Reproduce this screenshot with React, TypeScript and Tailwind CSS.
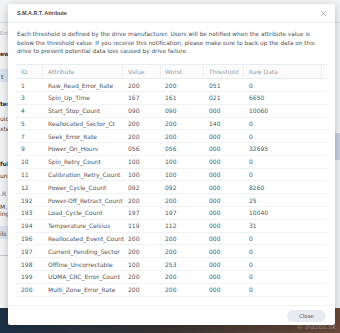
import React from 'react';

// Rows of the S.M.A.R.T. table
const rows = [
  ['1', 'Raw_Read_Error_Rate', '200', '200', '051', '0'],
  ['3', 'Spin_Up_Time', '167', '161', '021', '6650'],
  ['4', 'Start_Stop_Count', '090', '090', '000', '10060'],
  ['5', 'Reallocated_Sector_Ct', '200', '200', '140', '0'],
  ['7', 'Seek_Error_Rate', '200', '200', '000', '0'],
  ['9', 'Power_On_Hours', '056', '056', '000', '32695'],
  ['10', 'Spin_Retry_Count', '100', '100', '000', '0'],
  ['11', 'Calibration_Retry_Count', '100', '100', '000', '0'],
  ['12', 'Power_Cycle_Count', '092', '092', '000', '8260'],
  ['192', 'Power-Off_Retract_Count', '200', '200', '000', '25'],
  ['193', 'Load_Cycle_Count', '197', '197', '000', '10040'],
  ['194', 'Temperature_Celsius', '119', '112', '000', '31'],
  ['196', 'Reallocated_Event_Count', '200', '200', '000', '0'],
  ['197', 'Current_Pending_Sector', '200', '200', '000', '0'],
  ['198', 'Offline_Uncorrectable', '100', '253', '000', '0'],
  ['199', 'UDMA_CRC_Error_Count', '200', '200', '000', '0'],
  ['200', 'Multi_Zone_Error_Rate', '200', '200', '000', '0'],
];

const cols = 'grid grid-cols-[27px_80px_38px_43px_40px_78px_5px]';

export default function App() {
  return (
    <div className="relative w-[340px] h-[333px] overflow-hidden bg-gradient-to-r from-[#1d3147] via-[#3a3532] to-[#6a4a3a] font-['DejaVu_Sans',sans-serif]">
      {/* okno v pozadí (vidět jen okraj vlevo) */}
      <div className="absolute left-0 top-0 w-[340px] h-[308px] bg-[#f4f5f7]">
        <div className="absolute left-0 top-[22px] w-[340px] h-px bg-[#d9dde2]" />
        <div className="absolute left-0 top-[30px] text-[5px] text-[#a3abb4] whitespace-nowrap">Ent</div>
        <div className="absolute left-0 top-[49px] text-[6px] font-bold text-[#333] whitespace-nowrap">ew</div>
        <div className="absolute left-0 top-[69px] w-[8px] h-[13px] bg-[#dde6f0]" />
        <div className="absolute left-[1px] top-[72px] text-[6px] text-[#333] whitespace-nowrap">t</div>
        <div className="absolute left-0 top-[99px] text-[6px] font-bold text-[#333] whitespace-nowrap">tes</div>
        <div className="absolute left-0 top-[114px] text-[6px] text-[#444] whitespace-nowrap">uic</div>
        <div className="absolute left-0 top-[124px] text-[6px] text-[#444] whitespace-nowrap">xte</div>
        <div className="absolute left-0 top-[159px] text-[6px] font-bold text-[#333] whitespace-nowrap">ful</div>
        <div className="absolute left-0 top-[171px] text-[6px] text-[#444] whitespace-nowrap">un</div>
        <div className="absolute left-0 top-[189px] text-[6px] text-[#2f6fb5] whitespace-nowrap">.R</div>
        <div className="absolute left-0 top-[202px] text-[6px] text-[#444] whitespace-nowrap">M.</div>
        <div className="absolute left-0 top-[209px] text-[6px] text-[#444] whitespace-nowrap">ing</div>
        <div className="absolute left-0 top-[226px] w-[8px] h-[13px] bg-[#dde6f0]" />
        <div className="absolute left-0 top-[229px] text-[6px] text-[#444] whitespace-nowrap">ils</div>
        <div className="absolute left-0 top-[255px] w-[8px] h-px bg-[#c9ced4]" />
        <div className="absolute left-[335px] top-[133px] w-[5px] h-[27px] bg-[#c9d3de]" />
      </div>

      <div className="absolute right-[4px] bottom-[1px] text-[7px] text-white/40 italic">© Bazos.sk</div>

      {/* dialog S.M.A.R.T. */}
      <div className="absolute left-[8px] top-[4px] w-[327px] h-[321px] bg-white rounded-[2px] shadow-[0_2px_10px_rgba(0,0,0,0.25)] flex flex-col">
        <div className="h-[19px] flex items-center justify-between pl-[9px] pr-[8px] border-b border-[#eceef0]">
          <span className="text-[5.4px] font-bold text-[#40464d] font-['Liberation_Sans',sans-serif]">S.M.A.R.T. Attribute</span>
          <svg width="7" height="7" viewBox="0 0 10 10" className="text-[#8a9097]">
            <path d="M1.5 1.5 L8.5 8.5 M8.5 1.5 L1.5 8.5" stroke="currentColor" strokeWidth="1" fill="none" />
          </svg>
        </div>

        <p className="pl-[9px] pr-[18px] pt-[7px] text-[5.75px] leading-[8.7px] text-[#4a4f55]">
          Each threshold is defined by the drive manufacturer. Users will be notified when the attribute value is below the threshold value. If you receive this notification, please make sure to back up the data on this drive to prevent potential data loss caused by drive failure.
        </p>

        <div className="mx-[8px] mt-[8px] border-t border-[#e9ecef] text-[6px]">
          <div className={`${cols} h-[14px] items-center text-[#9aa0a6] border-b border-[#e9ecef] bg-[#fbfbfc]`}>
            <div className="pl-[5px] h-full flex items-center border-r border-[#eceef0]">ID</div>
            <div className="pl-[5px] h-full flex items-center border-r border-[#eceef0]">Attribute</div>
            <div className="pl-[5px] h-full flex items-center border-r border-[#eceef0]">Value</div>
            <div className="pl-[4px] h-full flex items-center border-r border-[#eceef0]">Worst</div>
            <div className="pl-[5px] h-full flex items-center border-r border-[#eceef0]">Threshold</div>
            <div className="pl-[5px] h-full flex items-center border-r border-[#eceef0]">Raw Data</div>
            <div />
          </div>
          {rows.map((r) => (
            <div key={r[0]} className={`${cols} h-[12.8px] items-center text-[#50565c] border-b border-[#f0f2f4]`}>
              <div className="pl-[5px]">{r[0]}</div>
              <div className="pl-[5px] whitespace-nowrap">{r[1]}</div>
              <div className="pl-[5px]">{r[2]}</div>
              <div className="pl-[4px]">{r[3]}</div>
              <div className="pl-[5px]">{r[4]}</div>
              <div className="pl-[5px]">{r[5]}</div>
              <div />
            </div>
          ))}
        </div>

        <div className="mt-auto h-[20px] border-t border-[#f0f2f4] flex items-start justify-end pr-[9px] pt-[4px]">
          <button className="w-[39px] h-[12px] rounded-full bg-[#e8ecf2] text-[5.5px] text-[#505860]">Close</button>
        </div>
      </div>
    </div>
  );
}
